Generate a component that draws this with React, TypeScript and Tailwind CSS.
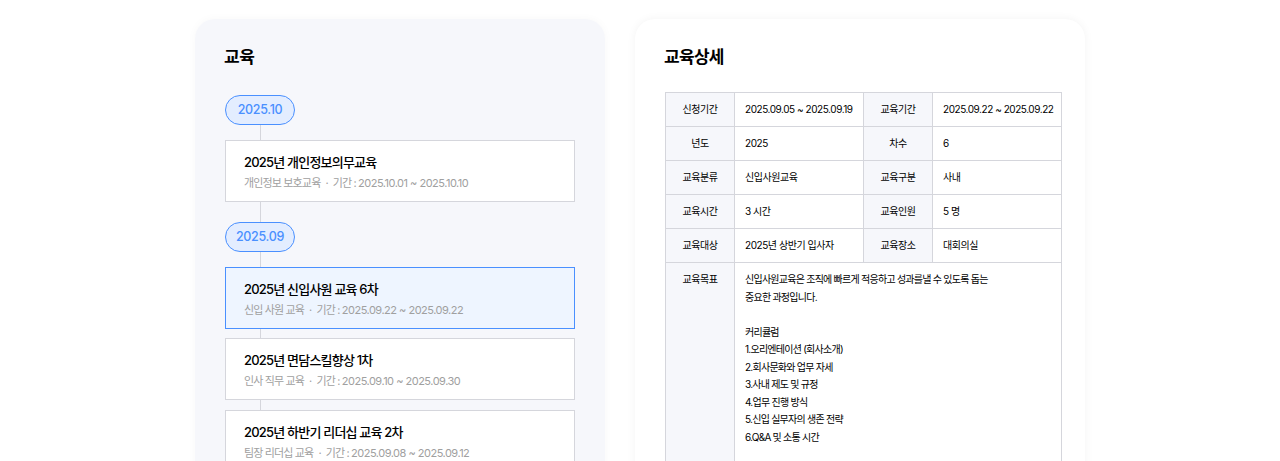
const fontStack = "font-['Inter','Noto_Sans_CJK_KR',sans-serif]";

interface Course {
  title: string;
  sub: string;
  period: string;
  active?: boolean;
}

const groups: { month: string; courses: Course[] }[] = [
  {
    month: '2025.10',
    courses: [{ title: '2025년 개인정보의무교육', sub: '개인정보 보호교육', period: '2025.10.01 ~ 2025.10.10' }],
  },
  {
    month: '2025.09',
    courses: [
      { title: '2025년 신입사원 교육 6차', sub: '신입 사원 교육', period: '2025.09.22 ~ 2025.09.22', active: true },
      { title: '2025년 면담스킬향상 1차', sub: '인사 직무 교육', period: '2025.09.10 ~ 2025.09.30' },
      { title: '2025년 하반기 리더십 교육 2차', sub: '팀장 리더십 교육', period: '2025.09.08 ~ 2025.09.12' },
    ],
  },
];

const rows = [
  ['신청기간', '2025.09.05 ~ 2025.09.19', '교육기간', '2025.09.22 ~ 2025.09.22'],
  ['년도', '2025', '차수', '6'],
  ['교육분류', '신입사원교육', '교육구분', '사내'],
  ['교육시간', '3 시간', '교육인원', '5 명'],
  ['교육대상', '2025년 상반기 입사자', '교육장소', '대회의실'],
];

const goalLines = [
  '신입사원교육은 조직에 빠르게 적응하고 성과를낼 수 있도록 돕는',
  '중요한 과정입니다.',
  '',
  '커리큘럼',
  '1.오리엔테이션 (회사소개)',
  '2.회사문화와 업무 자세',
  '3.사내 제도 및 규정',
  '4.업무 진행 방식',
  '5.신입 실무자의 생존 전략',
  '6.Q&A 및 소통 시간',
];

function Connector({ height }: { height: string }) {
  return <div className={`ml-[35px] w-px bg-[#d5d6dc] ${height}`} />;
}

function CourseCard({ course }: { course: Course }) {
  return (
    <div
      className={`h-[62px] border px-[18px] pt-[11px] ${
        course.active ? 'border-[#4a90ff] bg-[#eef5ff]' : 'border-[#d5d6dc] bg-white'
      }`}
    >
      <p className="text-[13px] leading-[20px] font-medium tracking-[-0.8px] text-black">{course.title}</p>
      <p className="mt-[2px] text-[11px] leading-[18px] tracking-[-0.85px] text-[#a0a0a0]">
        {course.sub}
        <span className="mx-[5px]">·</span>
        기간 : <span className="tracking-[-0.5px]">{course.period}</span>
      </p>
    </div>
  );
}

export default function App() {
  return (
    <div className={`flex h-[461px] justify-center gap-[30px] overflow-hidden bg-white pt-[19px] ${fontStack}`}>
      {/* Course list */}
      <section className="h-[600px] w-[410px] rounded-[20px] bg-[#f6f7fb] px-[30px] pt-[26px] shadow-[0_0_10px_rgba(0,0,0,0.03)]">
        <h2 className="-ml-px text-[17px] leading-[24px] font-semibold tracking-[-0.5px] text-black">교육</h2>
        <div className="mt-[26px]">
          {groups.map((group, gi) => (
            <div key={group.month}>
              {gi > 0 && <Connector height="h-[20px]" />}
              <div className="flex h-[30px] w-[70px] items-center justify-center rounded-full border border-[#4a90ff] bg-[#e3edff] text-[12.5px] font-medium tracking-[-0.3px] text-[#4a90ff]">
                {group.month}
              </div>
              {group.courses.map((course, ci) => (
                <div key={course.title}>
                  <Connector height={ci === 0 ? 'h-[15px]' : ci === 1 ? 'h-[9px]' : 'h-[10px]'} />
                  <CourseCard course={course} />
                </div>
              ))}
            </div>
          ))}
        </div>
      </section>

      {/* Course detail */}
      <section className="h-[600px] w-[450px] rounded-[20px] bg-white pt-[26px] pl-[30px] shadow-[0_0_10px_rgba(0,0,0,0.05)]">
        <h2 className="-ml-px text-[17px] leading-[24px] font-semibold tracking-[-0.7px] text-black">교육상세</h2>
        <table className="mt-[23px] w-[396px] table-fixed border-collapse text-[10px] tracking-[-0.45px] text-black">
          <colgroup>
            <col className="w-[69px]" />
            <col className="w-[129px]" />
            <col className="w-[69px]" />
            <col className="w-[129px]" />
          </colgroup>
          <tbody>
            {rows.map((row) => (
              <tr key={row[0]} className="h-[34px]">
                <th className="border border-[#d5d6dc] bg-[#f6f7fb] text-center font-normal">{row[0]}</th>
                <td className="border border-[#d5d6dc] pl-[10px] whitespace-nowrap">{row[1]}</td>
                <th className="border border-[#d5d6dc] bg-[#f6f7fb] text-center font-normal">{row[2]}</th>
                <td className="border border-[#d5d6dc] pl-[10px] whitespace-nowrap">{row[3]}</td>
              </tr>
            ))}
            <tr>
              <th className="border border-[#d5d6dc] bg-[#f6f7fb] pt-[8px] text-center align-top leading-[17.5px] font-normal">
                교육목표
              </th>
              <td colSpan={3} className="h-[240px] border border-[#d5d6dc] pt-[8px] pl-[10px] align-top leading-[17.5px] tracking-[-0.75px]">
                {goalLines.map((line, i) => (
                  <p key={i} className="h-[17.5px] whitespace-nowrap">
                    {line}
                  </p>
                ))}
              </td>
            </tr>
          </tbody>
        </table>
      </section>
    </div>
  );
}
